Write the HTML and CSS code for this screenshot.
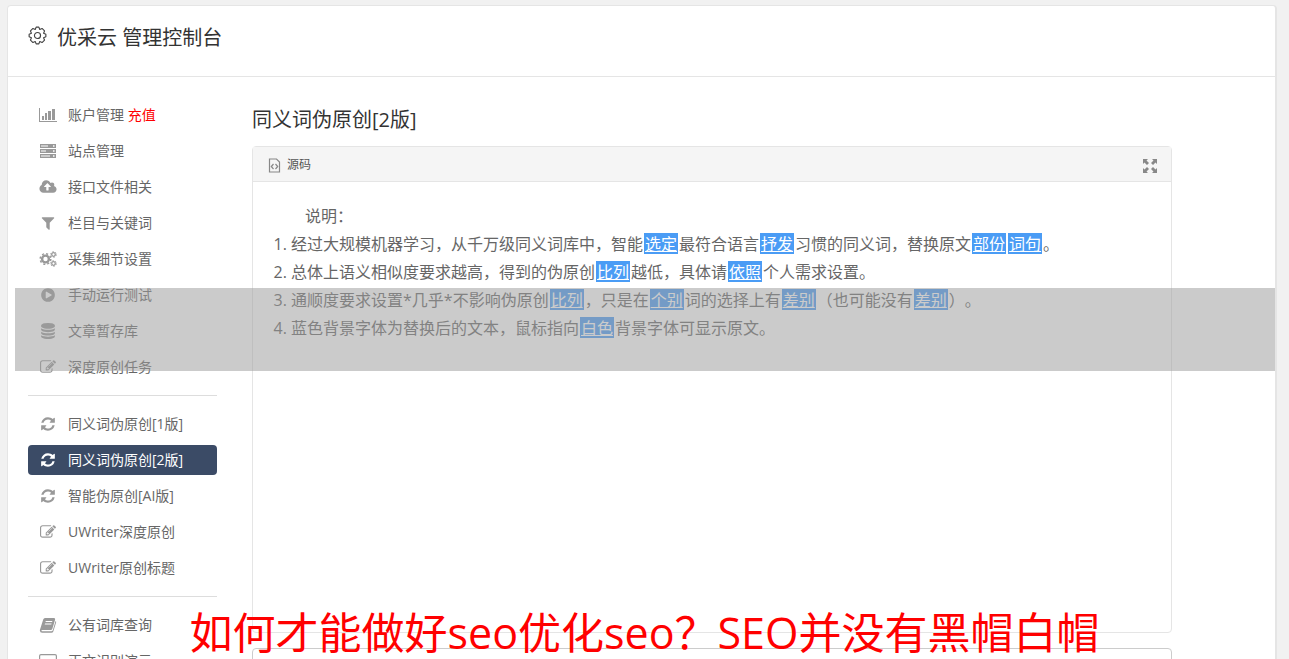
FILE: index.html
```html
<!DOCTYPE html>
<html lang="zh-CN">
<head>
    <meta charset="UTF-8">
    <meta name="viewport" content="width=device-width, initial-scale=1.0">
    <title>优采云 管理控制台</title>
    <link rel="stylesheet" href="styles.css">
</head>
<body>

<svg class="sprite" aria-hidden="true">
    <symbol id="i-refresh" viewBox="0 0 1792 1792"><path d="M1639 1056q0 5-1 7-64 268-268 434.5t-478 166.5q-146 0-282.5-55t-243.5-157l-129 129q-19 19-45 19t-45-19-19-45v-448q0-26 19-45t45-19h448q26 0 45 19t19 45-19 45l-137 137q71 66 161 102t187 36q134 0 250-65t186-179q11-17 53-117 8-23 30-23h192q13 0 22.5 9.5t9.5 22.5zm25-800v448q0 26-19 45t-45 19h-448q-26 0-45-19t-19-45 19-45l138-138q-148-137-349-137-134 0-250 65t-186 179q-11 17-53 117-8 23-30 23h-199q-13 0-22.5-9.5t-9.5-22.5v-7q65-268 270-434.5t480-166.5q146 0 284 55.5t245 156.5l130-129q19-19 45-19t45 19 19 45z"/></symbol>
    <symbol id="i-edit" viewBox="0 0 1792 1792"><path d="M888 1184l116-116-152-152-116 116v56h96v96h56zm440-720q-16-16-33 1l-350 350q-17 17-1 33t33-1l350-350q17-17 1-33zm80 594v190q0 119-84.5 203.5t-203.5 84.5h-832q-119 0-203.5-84.5t-84.5-203.5v-832q0-119 84.5-203.5t203.5-84.5h832q63 0 117 25 15 7 18 23 3 17-9 29l-49 49q-14 14-32 8-23-6-45-6h-832q-66 0-113 47t-47 113v832q0 66 47 113t113 47h832q66 0 113-47t47-113v-126q0-13 9-22l64-64q15-15 35-7t20 29zm-96-738l288 288-672 672h-288v-288zm444 132l-92 92-288-288 92-92q28-28 68-28t68 28l152 152q28 28 28 68t-28 68z"/></symbol>
</svg>

<div class="console">
    <header class="console-header">
        <svg class="gear" viewBox="0 0 20 20" aria-hidden="true">
            <path d="M8.600 1.200h2.800l1 2.400 2.400-1 2.600 2.600-1 2.400 2.400 1v2.800l-2.400 1 1 2.400-2.600 2.600-2.400-1-1 2.400H8.600l-1-2.400-2.400 1-2.600-2.600 1-2.400-2.400-1V8.600l2.400-1-1-2.400 2.600-2.600 2.400 1z"/>
            <circle cx="10" cy="10" r="3.200"/>
        </svg>
        <h1>优采云 管理控制台</h1>
    </header>

    <div class="console-body">
        <nav class="sidebar">
            <ul class="menu">
                <li><a href="#"><svg class="icon" viewBox="0 0 18 16"><path d="M0 1h1v13h17v1H0zM3 9h2v4H3zM6 6h2v7H6zM9 4h3v9H9zM13 2h3v11h-3z"/></svg>账户管理 <span class="recharge">充值</span></a></li>
                <li><a href="#"><svg class="icon" viewBox="0 0 18 16"><path fill-rule="evenodd" d="M1 1h16v4H1zM2 2.500v1h7v-1zM14 2.300v1.400h1.500V2.300zM1 6h16v4H1zM2 7.500v1h5v-1zM14 7.300v1.400h1.500V7.300zM1 11h16v4H1zM2 12.500v1h9v-1zM14 12.300v1.400h1.500v-1.400z"/></svg>站点管理</a></li>
                <li><a href="#"><svg class="icon" viewBox="0 0 1920 1792"><path d="M1280 864q0-14-9-23l-352-352q-9-9-23-9t-23 9l-351 351q-10 12-10 24 0 14 9 23t23 9h224v352q0 13 9.500 22.500t22.500 9.500h192q13 0 22.500-9.500t9.500-22.500v-352h224q13 0 22.500-9.500t9.500-22.500zm640 288q0 159-112.500 271.500t-271.500 112.500h-1088q-185 0-316.500-131.500t-131.500-316.500q0-130 70-240t188-165q-2-30-2-43 0-212 150-362t362-150q156 0 285.500 87t188.500 231q71-62 166-62 106 0 181 75t75 181q0 76-41 138 130 31 213.500 135.500t83.500 238.500z"/></svg>接口文件相关</a></li>
                <li><a href="#"><svg class="icon" viewBox="0 0 1792 1792"><path d="M1595 295q17 41-14 70l-493 493v742q0 42-39 59-13 5-25 5-27 0-45-19l-256-256q-19-19-19-45v-486l-493-493q-31-29-14-70 17-39 59-39h1280q42 0 59 39z"/></svg>栏目与关键词</a></li>
                <li><a href="#"><svg class="icon cogs" viewBox="0 0 18 16">
                    <circle cx="6.500" cy="8" r="3.400" stroke-width="2.400"/><circle cx="6.500" cy="8" r="5.300" stroke-width="1.500" stroke-dasharray="2.080 2.080"/>
                    <circle cx="14.500" cy="3.500" r="1.800" stroke-width="1.300"/><circle cx="14.500" cy="3.500" r="2.800" stroke-width="1" stroke-dasharray="1.460 1.460"/>
                    <circle cx="14.500" cy="12.500" r="1.800" stroke-width="1.300"/><circle cx="14.500" cy="12.500" r="2.800" stroke-width="1" stroke-dasharray="1.460 1.460"/>
                </svg>采集细节设置</a></li>
                <li><a href="#"><svg class="icon" viewBox="0 0 1792 1792"><path d="M896 128q209 0 385.500 103t279.500 279.500 103 385.500-103 385.500-279.500 279.500-385.500 103-385.500-103-279.500-279.500-103-385.500 103-385.500 279.500-279.500 385.500-103zm384 823q32-18 32-55t-32-55l-544-320q-31-19-64-1-32 19-32 56v640q0 37 32 56 16 8 32 8 17 0 32-9z"/></svg>手动运行测试</a></li>
                <li><a href="#"><svg class="icon" viewBox="0 0 1792 1792"><path d="M896 768q237 0 443-43t325-127v170q0 69-103 128t-280 93.500-385 34.500-385-34.500-280-93.500-103-128v-170q119 84 325 127t443 43zm0 768q237 0 443-43t325-127v170q0 69-103 128t-280 93.500-385 34.500-385-34.500-280-93.500-103-128v-170q119 84 325 127t443 43zm0-384q237 0 443-43t325-127v170q0 69-103 128t-280 93.500-385 34.500-385-34.500-280-93.500-103-128v-170q119 84 325 127t443 43zm0-1152q208 0 385 34.500t280 93.500 103 128v128q0 69-103 128t-280 93.500-385 34.500-385-34.500-280-93.500-103-128v-128q0-69 103-128t280-93.500 385-34.500z"/></svg>文章暂存库</a></li>
                <li><a href="#"><svg class="icon"><use href="#i-edit"/></svg>深度原创任务</a></li>
            </ul>
            <ul class="menu">
                <li><a href="#"><svg class="icon"><use href="#i-refresh"/></svg>同义词伪原创[1版]</a></li>
                <li><a href="#" class="active"><svg class="icon"><use href="#i-refresh"/></svg>同义词伪原创[2版]</a></li>
                <li><a href="#"><svg class="icon"><use href="#i-refresh"/></svg>智能伪原创[AI版]</a></li>
                <li><a href="#"><svg class="icon"><use href="#i-edit"/></svg>UWriter深度原创</a></li>
                <li><a href="#"><svg class="icon"><use href="#i-edit"/></svg>UWriter原创标题</a></li>
            </ul>
            <ul class="menu">
                <li><a href="#"><svg class="icon" viewBox="0 0 18 16"><path fill-rule="evenodd" d="M6 1h9q1.500.3 1.100 1.700L13.300 12q-.4 1-1.500 1H3.500q-1.300 0-1.100.8.200.5 1.200.5h8.800q1 0 1.400-1L16.600 4q.8.400.5 1.400l-2.800 9q-.5 1.400-1.800 1.400H3.200Q1 15.700.8 13.200L4.200 2.500Q4.800 1 6 1zM6.800 4l-.3 1h6.600l.3-1zM6 6.500l-.3 1h6.600l.3-1z"/></svg>公有词库查询</a></li>
                <li><a href="#"><svg class="icon" viewBox="0 0 18 16"><path fill-rule="evenodd" d="M2 1h14q2 0 2 2v8q0 2-2 2h-5l1 2H6l1-2H2q-2 0-2-2V3q0-2 2-2zM2 2.200q-.8 0-.8.800v6h15.600V3q0-.8-.8-.8z"/></svg>正文识别演示</a></li>
            </ul>
        </nav>

        <main class="content">
            <h2>同义词伪原创[2版]</h2>
            <section class="editor">
                <div class="toolbar">
                    <button type="button" class="source-btn">
                        <svg viewBox="0 0 12 15" aria-hidden="true"><path d="M1 1h7l3 3v10H1z"/><path d="M5 6L2.800 8.500 5 11M7 6l2.200 2.500L7 11"/></svg>
                        源码
                    </button>
                    <button type="button" class="full-btn" aria-label="全屏">
                        <svg viewBox="0 0 14 14" aria-hidden="true"><path d="M0 0h5L3.500 1.500l2.500 2.500-2 2-2.500-2.500L0 5zM14 0v5l-1.500-1.500L10 6 8 4l2.500-2.500L9 0zM0 14V9l1.500 1.500L4 8l2 2-2.500 2.500L5 14zM14 14H9l1.500-1.500L8 10l2-2 2.500 2.500L14 9z"/></svg>
                    </button>
                </div>
                <div class="editor-text">
                    <p>说明：</p>
                    <ol>
                        <li>经过大规模机器学习，从千万级同义词库中，智能<a href="#">选定</a>最符合语言<a href="#">抒发</a>习惯的同义词，替换原文<a href="#">部份</a><a href="#">词句</a>。</li>
                        <li>总体上语义相似度要求越高，得到的伪原创<a href="#">比列</a>越低，具体请<a href="#">依照</a>个人需求设置。</li>
                        <li>通顺度要求设置*几乎*不影响伪原创<a href="#">比列</a>，只是在<a href="#">个别</a>词的选择上有<a href="#">差别</a>（也可能没有<a href="#">差别</a>）。</li>
                        <li>蓝色背景字体为替换后的文本，鼠标指向<a href="#">白色</a>背景字体可显示原文。</li>
                    </ol>
                </div>
            </section>
            <textarea class="source-text" aria-label="原文"></textarea>
        </main>
    </div>
</div>

<div class="band"></div>
<div class="caption">如何才能做好seo优化seo？SEO并没有黑帽白帽</div>

</body>
</html>
```
FILE: styles.css
```css
* {
    box-sizing: border-box;
}
body {
    position: relative;
    height: 100vh;
    margin: 0;
    padding: 5px 12px 0 7px;
    overflow: hidden;
    background-color: #f1f1f1;
    color: #666;
    font-family: "Open Sans", "Noto Sans CJK SC", sans-serif;
    font-size: 14px;
    text-spacing-trim: space-all;
}
a {
    color: inherit;
    text-decoration: none;
}
h1, h2 {
    margin: 0;
    color: #333;
    font-size: 20px;
    font-weight: 400;
    line-height: 30px;
}
ul, ol {
    margin: 0;
    padding: 0;
}
.sprite {
    display: none;
}
.console {
    min-height: 100vh;
    background-color: #fff;
    border: 1px solid #e5e5e5;
    border-right-width: 2px;
    border-radius: 4px;
}
.console-header {
    display: flex;
    gap: 10px;
    padding: 17px 20px 23px;
    border-bottom: 1px solid #e5e5e5;
}
.gear {
    width: 19px;
    height: 19px;
    margin-top: 3px;
    fill: none;
    stroke: #444;
    stroke-width: 1.2;
    stroke-linejoin: round;
}
.console-body {
    display: flex;
    gap: 35px;
    padding: 23px 103px 0 20px;
}

/* sidebar */
.sidebar {
    flex: 0 0 189px;
}
.menu {
    display: flex;
    flex-direction: column;
    gap: 6px;
    list-style: none;
}
.menu + .menu {
    margin-top: 13px;
    padding-top: 13px;
    border-top: 1px solid #ddd;
}
.menu a {
    display: flex;
    align-items: center;
    height: 30px;
    padding: 0 11px;
    border-radius: 4px;
    line-height: 30px;
    white-space: pre;
}
.menu .active {
    background-color: #3b4b66;
    color: #fff;
}
.icon {
    width: 18px;
    height: 16px;
    margin-right: 11px;
    fill: #999;
}
.active .icon {
    fill: #fff;
}
.cogs {
    fill: none;
    stroke: #999;
}
.recharge {
    color: #f00;
}

/* content */
.content {
    flex: 1;
    min-width: 0;
}
.content h2 {
    margin: 5px 0 11px;
}
.editor {
    min-height: 487px;
    border: 1px solid #e5e5e5;
    border-radius: 4px;
}
.toolbar {
    display: flex;
    justify-content: space-between;
    align-items: center;
    height: 35px;
    padding: 0 14px 0 15px;
    background-color: #f5f5f5;
    border-bottom: 1px solid #e5e5e5;
}
.toolbar button {
    display: flex;
    align-items: center;
    gap: 6px;
    padding: 0;
    border: none;
    background: none;
    color: #555;
    font-family: inherit;
    font-size: 12px;
    cursor: pointer;
}
.toolbar svg {
    margin-top: 3px;
}
.source-btn svg {
    width: 13px;
    height: 15px;
    fill: none;
    stroke: #888;
    stroke-width: 1.2;
}
.full-btn svg {
    width: 14px;
    height: 14px;
    fill: #888;
}
.editor-text {
    padding: 20px;
    font-size: 16px;
    line-height: 28px;
}
.editor-text p {
    margin: 0;
    text-indent: 2em;
}
.editor-text ol {
    padding-left: 18px;
}
.editor-text a {
    display: inline-block;
    margin: 0 1px;
    padding: 2px 1px 0;
    background-color: #4a9cf5;
    color: #fff;
    line-height: 19px;
    text-decoration: underline;
}
.source-text {
    display: block;
    width: 100%;
    height: 120px;
    margin-top: 15px;
    border: 1px solid #ccc;
    border-radius: 4px;
    resize: none;
}

/* layers over the page */
.band {
    position: absolute;
    top: 288px;
    right: 14px;
    left: 15px;
    height: 83px;
    background-color: rgba(155, 155, 155, 0.52);
}
.caption {
    position: absolute;
    right: 0;
    bottom: 0;
    left: 0;
    color: #f00;
    font-size: 43px;
    line-height: 52px;
    text-align: center;
    white-space: nowrap;
}
```
